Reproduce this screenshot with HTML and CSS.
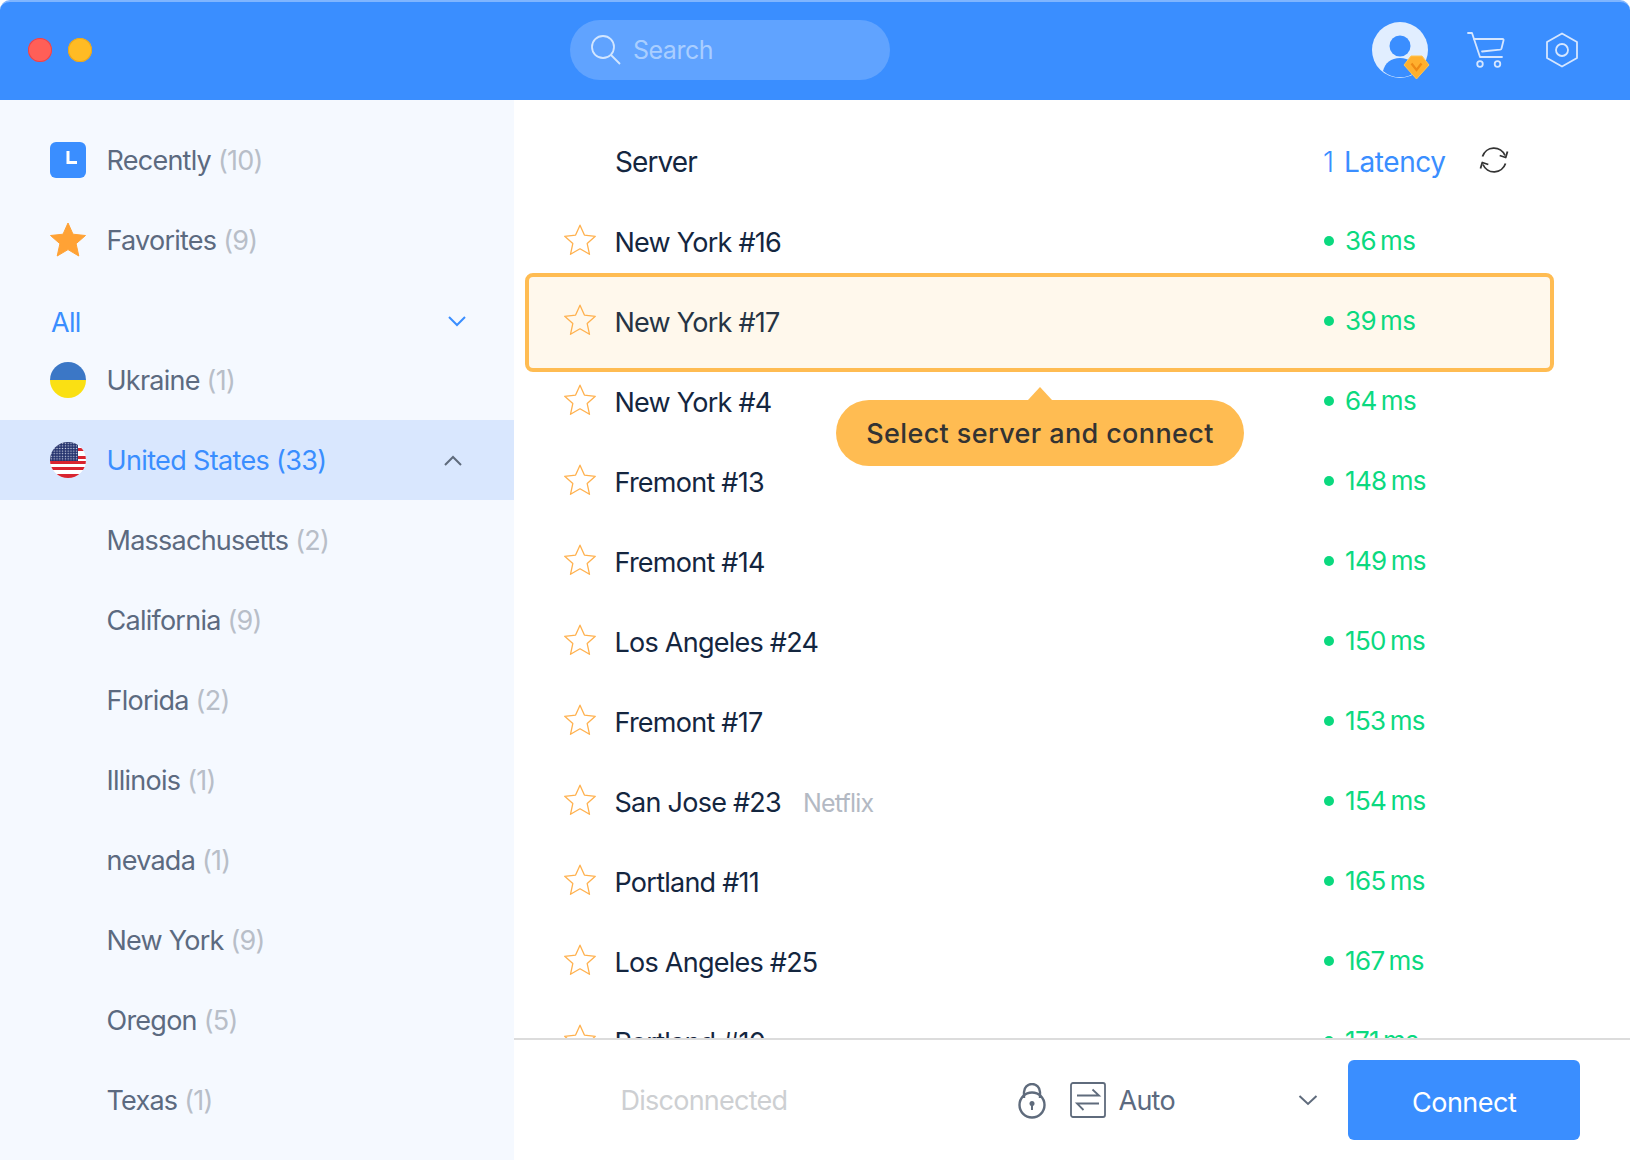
FILE: index.html
```html
<!DOCTYPE html>
<html lang="en">
<head>
<meta charset="utf-8">
<title>VPN</title>
<link rel="stylesheet" href="styles.css">
</head>
<body>
<svg class="defs" width="0" height="0" aria-hidden="true">
  <symbol id="star" viewBox="0 0 34 34"><path d="M17 2.200l4.400 9.900 10.900 1.200-8.100 7.300 2.300 10.700-9.500-5.500-9.500 5.500 2.300-10.700-8.100-7.300 10.900-1.200z" fill="none" stroke="#ffb14e" stroke-width="1.300" stroke-linejoin="round"/></symbol>
</svg>
<div class="app">
  <header class="topbar">
    <div class="lights"><span class="light red"></span><span class="light yellow"></span></div>
    <div class="search">
      <svg class="search-icon" width="32" height="34" viewBox="0 0 32 34"><circle cx="13" cy="13" r="11" fill="none" stroke="#d3e6ff" stroke-width="1.800"/><path d="M21 21l9 9" stroke="#d3e6ff" stroke-width="1.800" fill="none"/></svg>
      <span>Search</span>
    </div>
    <div class="top-actions">
      <div class="avatar">
        <svg width="60" height="60" viewBox="0 0 60 60"><circle cx="28" cy="28" r="28" fill="#e1eeff"/><circle cx="28" cy="24" r="10.500" fill="#3a8eff"/><path d="M11 49C13 41 19 36 28 36s15 5 17 13a26 26 0 0 1-34 0z" fill="#3a8eff"/><path d="M32 43l7-9h11l7 9-12.500 14z" fill="#ffb02e" stroke="#ffc552" stroke-width="1" stroke-linejoin="round"/><path d="M39.500 41.500l5 6.500 5-6.500" fill="none" stroke="#ee8a14" stroke-width="2.200"/></svg>
      </div>
      <svg class="cart" width="38" height="36" viewBox="0 0 38 36" fill="none" stroke="#d5e6ff" stroke-width="1.800" stroke-linecap="round" stroke-linejoin="round"><path d="M1 1h4l8 24h22"/><path d="M7 7h28.500q1.500 0 1 1.500l-2 8q-.3 1-1.500 1.200L15 19.500"/><circle cx="13" cy="32" r="2.800"/><circle cx="30.500" cy="32" r="2.800"/></svg>
      <svg class="gear" width="34" height="36" viewBox="0 0 34 36" fill="none" stroke="#d5e6ff" stroke-width="1.800" stroke-linejoin="round"><path d="M17 1.500l15 8.500v16l-15 8.500L2 26V10z"/><circle cx="17" cy="18" r="6"/></svg>
    </div>
  </header>
  <div class="body">
    <aside class="sidebar">
      <div class="side-row">
        <span class="clock"><svg width="36" height="36" viewBox="0 0 36 36"><path d="M18 9v11.500h9" fill="none" stroke="#fff" stroke-width="3"/></svg></span>
        <span class="side-name">Recently <em>(10)</em></span>
      </div>
      <div class="side-row">
        <svg class="side-icon" width="36" height="36" viewBox="0 0 36 36"><path d="M18 1l5 11.200 12.500 1.300-9.400 8.200 2.700 12.300L18 27.600 7.200 34l2.700-12.300L.5 13.500 13 12.200z" fill="#ffa235" stroke="#ffa235" stroke-width="1" stroke-linejoin="round"/></svg>
        <span class="side-name">Favorites <em>(9)</em></span>
      </div>
      <div class="all-row">
        <span>All</span>
        <svg class="all-chev" width="20" height="12" viewBox="0 0 20 12"><path d="M2 2l8 8 8-8" fill="none" stroke="#3a8eff" stroke-width="2"/></svg>
      </div>
      <div class="side-row">
        <svg class="side-icon flag" width="36" height="36" viewBox="0 0 36 36"><rect width="36" height="18" fill="#3b77c6"/><rect y="18" width="36" height="18" fill="#fae013"/></svg>
        <span class="side-name">Ukraine <em>(1)</em></span>
      </div>
      <div class="side-row active">
        <svg class="side-icon flag" width="36" height="36" viewBox="0 0 36 36">
          <defs><pattern id="dots" width="2.800" height="2.600" patternUnits="userSpaceOnUse"><circle cx="1.400" cy="1.300" r=".7" fill="#d6dcea"/></pattern></defs>
          <rect width="36" height="36" fill="#fff"/>
          <rect y="19" width="36" height="3" fill="#d8232f"/><rect y="25" width="36" height="3" fill="#d8232f"/><rect y="32" width="36" height="4" fill="#d8232f"/>
          <rect y="14" x="28" width="8" height="3" fill="#d8232f"/><rect x="28" y="6" width="8" height="3" fill="#d8232f"/>
          <rect width="28" height="19" fill="#27356f"/><rect width="28" height="19" fill="url(#dots)"/>
        </svg>
        <span class="side-name">United States (33)</span>
        <svg class="chev-up" width="20" height="12" viewBox="0 0 20 12"><path d="M2 10l8-8 8 8" fill="none" stroke="#5f6b7c" stroke-width="2"/></svg>
      </div>
      <div class="side-row sub"><span class="side-name">Massachusetts <em>(2)</em></span></div>
      <div class="side-row sub"><span class="side-name">California <em>(9)</em></span></div>
      <div class="side-row sub"><span class="side-name">Florida <em>(2)</em></span></div>
      <div class="side-row sub"><span class="side-name">Illinois <em>(1)</em></span></div>
      <div class="side-row sub"><span class="side-name">nevada <em>(1)</em></span></div>
      <div class="side-row sub"><span class="side-name">New York <em>(9)</em></span></div>
      <div class="side-row sub"><span class="side-name">Oregon <em>(5)</em></span></div>
      <div class="side-row sub"><span class="side-name">Texas <em>(1)</em></span></div>
    </aside>
    <main class="main">
      <div class="list">
        <div class="list-head">
          <span class="col-name">Server</span>
          <span class="col-lat"><span class="sort">1</span>Latency</span>
          <svg class="refresh" width="30" height="30" viewBox="0 0 30 30" fill="none" stroke="#333" stroke-width="1.800" stroke-linejoin="round"><path d="M3.500 11.500A12 12 0 0 1 26 10.500"/><path d="M28.500 6.500l-1.800 6-6-2"/><path d="M26.500 18.500A12 12 0 0 1 4 19.500"/><path d="M1.500 23.500l1.800-6 6 2"/></svg>
        </div>
        <div class="srv"><svg class="srv-star" width="34" height="34"><use href="#star"/></svg><span class="srv-name">New York #16</span><span class="ping">36 ms</span></div>
        <div class="srv lighter"><svg class="srv-star" width="34" height="34"><use href="#star"/></svg><span class="srv-name">New York #17</span><span class="ping">39 ms</span></div>
        <div class="srv"><svg class="srv-star" width="34" height="34"><use href="#star"/></svg><span class="srv-name">New York #4</span><span class="ping">64 ms</span></div>
        <div class="srv"><svg class="srv-star" width="34" height="34"><use href="#star"/></svg><span class="srv-name">Fremont #13</span><span class="ping">148 ms</span></div>
        <div class="srv"><svg class="srv-star" width="34" height="34"><use href="#star"/></svg><span class="srv-name">Fremont #14</span><span class="ping">149 ms</span></div>
        <div class="srv"><svg class="srv-star" width="34" height="34"><use href="#star"/></svg><span class="srv-name">Los Angeles #24</span><span class="ping">150 ms</span></div>
        <div class="srv"><svg class="srv-star" width="34" height="34"><use href="#star"/></svg><span class="srv-name">Fremont #17</span><span class="ping">153 ms</span></div>
        <div class="srv"><svg class="srv-star" width="34" height="34"><use href="#star"/></svg><span class="srv-name">San Jose #23<span class="tag">Netflix</span></span><span class="ping">154 ms</span></div>
        <div class="srv"><svg class="srv-star" width="34" height="34"><use href="#star"/></svg><span class="srv-name">Portland #11</span><span class="ping">165 ms</span></div>
        <div class="srv"><svg class="srv-star" width="34" height="34"><use href="#star"/></svg><span class="srv-name">Los Angeles #25</span><span class="ping">167 ms</span></div>
        <div class="srv"><svg class="srv-star" width="34" height="34"><use href="#star"/></svg><span class="srv-name">Portland #10</span><span class="ping">171 ms</span></div>
        <div class="highlight"></div>
        <div class="tip">Select server and connect</div>
      </div>
      <footer class="footer">
        <span class="status">Disconnected</span>
        <svg class="lock" width="30" height="36" viewBox="0 0 30 36" fill="none" stroke="#5f6b7c" stroke-width="2.400"><path d="M7 15V9a8 8 0 0 1 16 0v6"/><circle cx="15" cy="22" r="12.500"/><circle cx="15" cy="20.500" r="2.500" fill="#5f6b7c" stroke="none"/><path d="M15 21v6" stroke-width="2"/></svg>
        <svg class="swap" width="36" height="36" viewBox="0 0 36 36" fill="none" stroke="#5f6b7c" stroke-width="1.800"><rect x="1" y="1" width="34" height="34" rx="2"/><path d="M7 13.500h22l-6.500-6"/><path d="M29 21.500H7l6.500 6.500"/></svg>
        <span class="proto">Auto</span>
        <svg class="proto-chev" width="20" height="12" viewBox="0 0 20 12"><path d="M1.500 2l8.500 8 8.500-8" fill="none" stroke="#5f6b7c" stroke-width="2"/></svg>
        <button class="connect">Connect</button>
      </footer>
    </main>
  </div>
</div>
</body>
</html>
```
FILE: styles.css
```css
* { box-sizing: border-box; }
html, body { margin: 0; padding: 0; background: #fff; }
body { font-family: Inter, "Liberation Sans", sans-serif; font-size: 27px; letter-spacing: -.75px; }
.defs { position: absolute; }
.app { width: 1630px; height: 1160px; display: flex; flex-direction: column; overflow: hidden; }
.topbar { height: 100px; flex: none; background: #3a8eff; border-top: 2px solid #7fb5ff; border-radius: 10px 10px 0 0; display: flex; align-items: center; padding: 0 0 2px 28px; position: relative; }
.lights { display: flex; gap: 16px; width: 542px; }
.light { width: 24px; height: 24px; border-radius: 50%; }
.red { background: #ff5f57; box-shadow: inset 0 0 0 1px #e5434f; }
.yellow { background: #ffbb24; box-shadow: inset 0 0 0 1px #eaa51c; }
.search { width: 320px; height: 60px; border-radius: 30px; background: #60a3ff; display: flex; align-items: center; gap: 11px; padding-left: 20px; color: #a9ceff; font-size: 25px; letter-spacing: -.5px; }
.search-icon { flex: none; margin-top: 2px; }
.top-actions { margin-left: auto; display: flex; align-items: center; padding-right: 51px; }
.avatar { width: 60px; height: 60px; margin-right: 35px; margin-top: 4px; }
.cart { margin-right: 40px; }
.body { flex: 1; display: flex; min-height: 0; }
.sidebar { width: 514px; flex: none; background: #f5f9ff; padding-top: 20px; overflow: hidden; }
.side-row { height: 80px; display: flex; align-items: center; padding-left: 50px; color: #5c6a80; }
.side-row.sub { padding-left: 106.500px; }
.side-row.active { background: #d9e7fe; color: #3a8eff; padding-right: 51px; letter-spacing: -.65px; }
.side-icon, .clock { width: 36px; height: 36px; flex: none; margin-right: 20.500px; }
.clock { background: #3a8eff; border-radius: 6px; display: block; }
.clock svg { display: block; }
.flag { border-radius: 50%; overflow: hidden; }
.side-name em { font-style: normal; color: #b8bec8; }
.chev-up { margin-left: auto; margin-top: 2px; }
.all-row { height: 60px; padding: 24px 47px 0 51px; display: flex; align-items: center; justify-content: space-between; color: #3a8eff; }
.all-chev { margin-top: -3px; }
.main { flex: 1; min-width: 0; display: flex; flex-direction: column; }
.list { flex: 1; min-height: 0; overflow: hidden; position: relative; padding-top: 20px; isolation: isolate; }
.list-head, .srv { height: 80px; display: flex; align-items: center; color: #14263f; }
.list-head { padding-left: 101px; }
.col-name { width: 708px; margin-top: 3px; font-size: 28px; letter-spacing: -.9px; }
.col-lat { color: #3a8eff; display: flex; width: 156px; margin-top: 3px; font-size: 28px; letter-spacing: -.4px; }
.sort { width: 21px; font-weight: 300; }
.srv { padding-left: 49px; }
.srv-star { flex: none; margin-right: 17.500px; }
.srv-name { width: 709.500px; margin-top: 4px; flex: none; }
.lighter .srv-name { color: #263444; }
.tag { color: #b3b9c3; font-size: 25px; margin-left: 22px; letter-spacing: -.8px; }
.ping { color: #0bd97f; position: relative; padding-left: 21px; font-size: 26px; margin-top: 1px; letter-spacing: -.65px; word-spacing: -2.500px; }
.ping::before { content: ""; position: absolute; left: 0; top: 50%; width: 10px; height: 10px; margin-top: -5px; border-radius: 50%; background: #0bd97f; }
.highlight { position: absolute; left: 11px; top: 173px; width: 1029px; height: 99px; border: 4px solid #ffbc52; border-radius: 8px; background: #fff8ec; z-index: -1; }
.tip { position: absolute; left: 322px; top: 300px; width: 408px; height: 66px; border-radius: 33px; background: #ffbc52; color: #333; font-weight: 500; font-size: 27px; letter-spacing: .38px; display: flex; align-items: center; justify-content: center; }
.tip::before { content: ""; position: absolute; left: 192px; top: -13px; width: 0; height: 0; border-left: 12px solid transparent; border-right: 12px solid transparent; border-bottom: 13px solid #ffbc52; }
.footer { height: 122px; flex: none; border-top: 2px solid #dcdcdc; display: flex; align-items: center; background: #fff; padding: 0 50px 0 106.500px; }
.status { color: #cdcfd2; width: 396.500px; }
.lock { flex: none; margin-right: 23px; margin-top: 1px; }
.swap { flex: none; margin-right: 13px; }
.proto { color: #5c6a80; width: 180px; }
.proto-chev { flex: none; margin-right: 30px; }
.connect { width: 232px; height: 80px; border: 0; border-radius: 6px; background: #3a8eff; color: #fff; font: inherit; letter-spacing: -.5px; padding: 4px 0 0; }
```
